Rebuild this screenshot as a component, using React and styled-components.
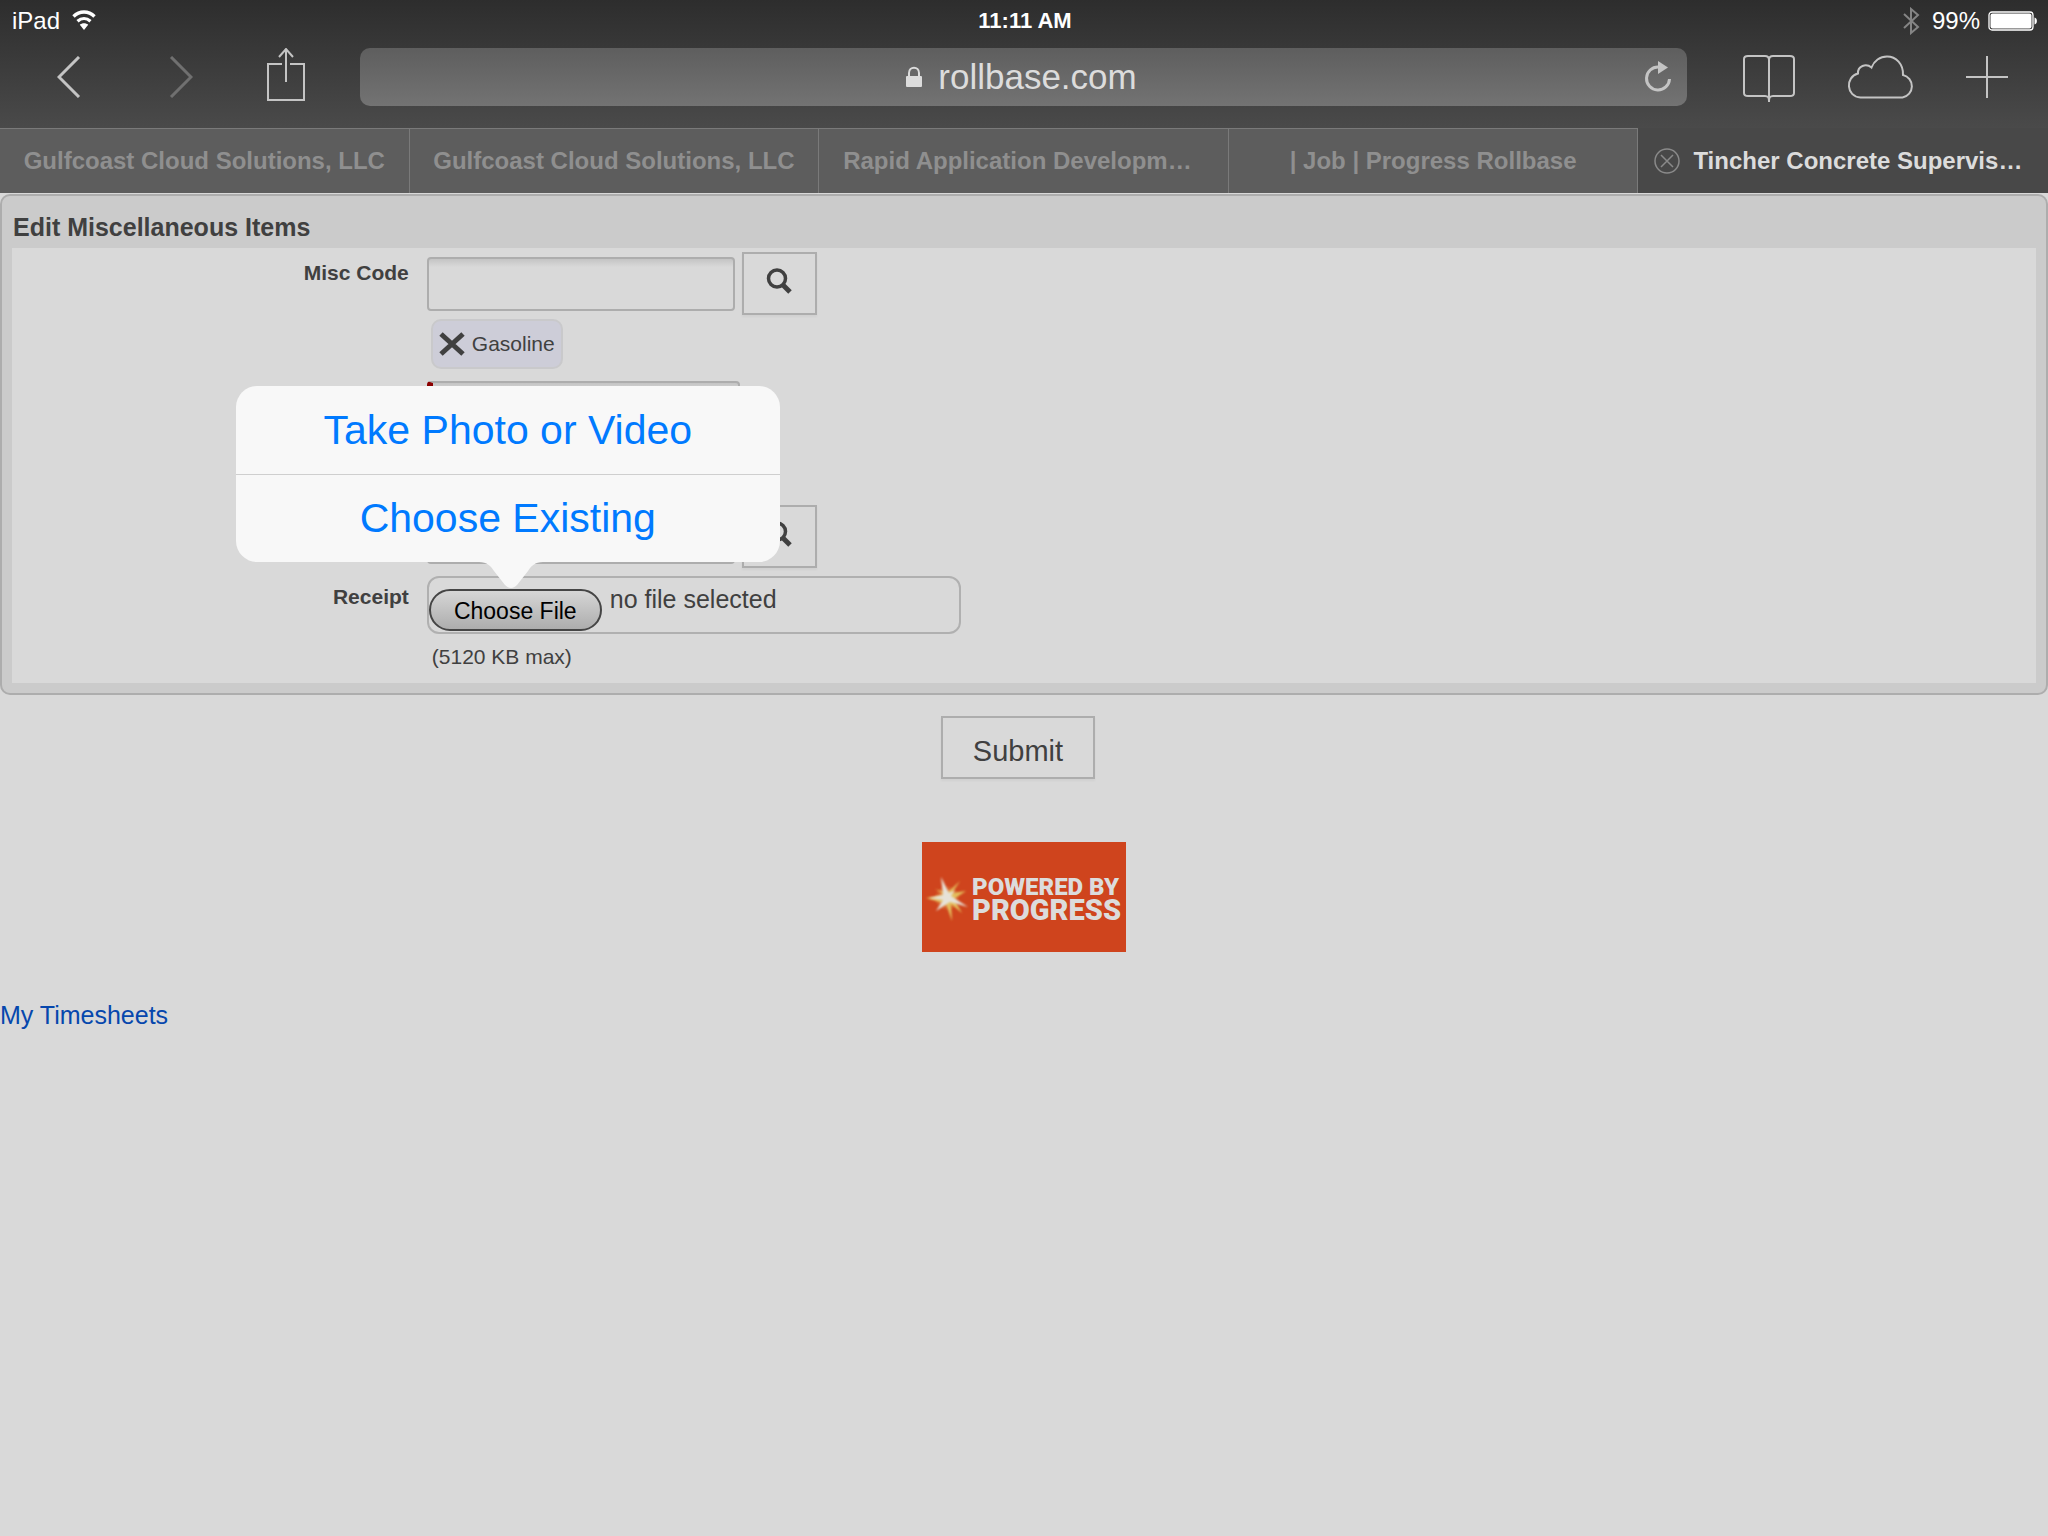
import React, { useState } from 'react';
import styled, { createGlobalStyle } from 'styled-components';

const GlobalStyle = createGlobalStyle`
  * {
    box-sizing: border-box;
  }

  body {
    margin: 0;
    background-color: #d9d9d9;
    color: #404040;
    font-family: "Liberation Sans", Arial, sans-serif;
    font-size: 25px;
    line-height: 28px;
  }

  button,
  input {
    font-family: inherit;
  }
`;

const Browser = styled.header`
  background: linear-gradient(#2d2d2d, #4a4a4a 128px);
`;

const StatusBar = styled.div`
  display: grid;
  grid-template-columns: 1fr auto 1fr;
  align-items: center;
  height: 42px;
  padding: 0 10px 0 12px;
  font-size: 24px;
  color: #fff;
`;

const StatusGroup = styled.div`
  display: flex;
  align-items: center;
  justify-content: ${({ $end }) => ($end ? 'flex-end' : 'flex-start')};
  gap: ${({ $end }) => ($end ? '8px' : '12px')};
`;

const Time = styled.span`
  font-size: 22px;
  font-weight: bold;
`;

const Toolbar = styled.nav`
  display: flex;
  align-items: center;
  height: 86px;
  padding: 0 40px 16px 57px;
`;

const IconGroup = styled.div`
  display: flex;
  align-items: center;
  flex: none;
  gap: ${({ $gap }) => $gap};
`;

const IconButton = styled.button`
  display: flex;
  flex: none;
  padding: 0;
  border: none;
  background: none;
  color: ${({ disabled }) => (disabled ? '#707070' : '#c4c4c4')};
  cursor: pointer;
`;

const AddressBar = styled.div`
  display: flex;
  align-items: center;
  flex: 1;
  height: 58px;
  margin: 0 55px 0 54px;
  padding: 0 15px;
  border-radius: 10px;
  background: linear-gradient(#5e5e5e, #737373);
  color: #dcdcdc;
`;

const Address = styled.div`
  display: flex;
  align-items: center;
  justify-content: center;
  gap: 16px;
  flex: 1;
  padding-left: 24px;
  font-size: 35px;
  line-height: 40px;
`;

const Tabs = styled.div`
  display: grid;
  grid-template-columns: repeat(5, 1fr);
  height: 65px;
`;

const Tab = styled.div`
  display: flex;
  align-items: center;
  justify-content: ${({ $long }) => ($long ? 'flex-start' : 'center')};
  gap: 13px;
  min-width: 0;
  padding: 0 ${({ $active }) => ($active ? '16px' : '24px')};
  border-top: 1px solid ${({ $active }) => ($active ? 'transparent' : '#7a7a7a')};
  border-right: ${({ $active }) => ($active ? 'none' : '1px solid #7a7a7a')};
  background-color: ${({ $active }) => ($active ? '#484848' : '#5d5d5d')};
`;

const TabLink = styled.a`
  font-size: 24px;
  font-weight: bold;
  white-space: nowrap;
  text-decoration: none;
  color: ${({ $active }) => ($active ? '#dcdcdc' : '#8f8f8f')};
`;

const Panel = styled.section`
  margin-top: 1px;
  padding: 17px 10px 10px;
  border: 2px solid #adadad;
  border-radius: 10px;
  background-color: #cbcbcb;
`;

const Title = styled.h1`
  margin: 0 0 7px 1px;
  font-size: 25px;
  line-height: 28px;
`;

const Fields = styled.div`
  display: grid;
  gap: 8px;
  padding: 4px 0 14px;
  background-color: #d9d9d9;
`;

const Field = styled.div`
  display: grid;
  grid-template-columns: 20% 1fr;
`;

const Label = styled.label`
  padding: 9px 8px 0 0;
  font-size: 21px;
  font-weight: bold;
  line-height: 24px;
  text-align: right;
`;

const Control = styled.div`
  display: flex;
  flex-direction: column;
  align-items: flex-start;
  grid-column: 2;
  padding-left: 10px;
`;

const Lookup = styled.div`
  display: flex;
  align-items: center;
  gap: 7px;
`;

const TextBox = styled.input`
  width: ${({ required }) => (required ? '313px' : '308px')};
  height: 54px;
  padding: 0 8px;
  border: 2px solid #adadad;
  border-left: ${({ required }) => (required ? '6px solid #8b0000' : '2px solid #adadad')};
  border-radius: 4px;
  background: linear-gradient(#c4c4c4, #d9d9d9 8px);
  font-size: 21px;
`;

const SquareButton = styled.button`
  display: flex;
  align-items: center;
  justify-content: center;
  min-width: 75px;
  height: 63px;
  padding: ${({ $text }) => ($text ? '7px 30px 0' : '0 0 5px')};
  border: 2px solid #adadad;
  background-color: #d9d9d9;
  box-shadow: 0 2px 2px #0000000a;
  color: #404040;
  font-size: 29px;
`;

const Chip = styled.div`
  display: flex;
  align-items: center;
  gap: 7px;
  height: 50px;
  margin: 4px 0 4px 4px;
  padding: 0 6px;
  border: 2px solid #c9c9cb;
  border-radius: 10px;
  background-color: #cdcdd8;
  font-size: 21px;
  line-height: 24px;
`;

const FileBox = styled.div`
  position: relative;
  display: flex;
  gap: 8px;
  width: 534px;
  height: 58px;
  border: 2px solid #b0b0b0;
  border-radius: 12px;
`;

const FileInput = styled.input`
  position: absolute;
  width: 1px;
  height: 1px;
  opacity: 0;
`;

const FileButton = styled.label`
  display: flex;
  align-items: center;
  justify-content: center;
  width: 173px;
  height: 42px;
  margin-top: 11px;
  padding-top: 2px;
  border: 2px solid #454545;
  border-radius: 21px;
  background: linear-gradient(#d6d6d6, #adadad);
  color: #000;
  font-size: 23px;
`;

const FileName = styled.span`
  padding-top: 7px;
`;

const Hint = styled.small`
  margin: 11px 0 0 5px;
  font-size: 21px;
  line-height: 24px;
`;

const Popover = styled.div`
  position: absolute;
  bottom: 70px;
  left: -193px;
  width: 544px;
  border-radius: 21px;
  background-color: #f8f8f8;
`;

const PopoverButton = styled.button`
  display: block;
  width: 100%;
  height: 88px;
  padding: ${({ $divided }) => ($divided ? '0 0 2px' : '0')};
  border: none;
  border-top: ${({ $divided }) => ($divided ? '1px solid #cfcfcf' : 'none')};
  background: none;
  color: #007aff;
  font-size: 41px;
  line-height: 48px;
  cursor: pointer;
`;

const PopoverArrow = styled.svg`
  position: absolute;
  top: 100%;
  left: 243px;
`;

const Actions = styled.div`
  display: flex;
  justify-content: center;
  padding: 21px 12px 0 0;
`;

const Footer = styled.footer`
  padding-top: 63px;
`;

const Badge = styled.a`
  display: flex;
  align-items: center;
  width: 204px;
  height: 110px;
  margin: 0 auto 49px;
  padding: 4px 0 0 3px;
  background-color: #cf441d;
  color: #dcdcdc;
  font-family: Roboto, sans-serif;
  font-weight: 900;
  text-decoration: none;
`;

const BadgeText = styled.span`
  display: flex;
  flex-direction: column;
  margin-left: 3px;
`;

const BadgeLine = styled.span`
  font-size: ${({ $large }) => ($large ? '29px' : '24px')};
  line-height: 23px;
`;

const PageLink = styled.a`
  color: #0647ad;
  text-decoration: none;
`;

const WifiIcon = () => (
  <svg width="24" height="24" viewBox="0 0 24 24" fill="none" stroke="currentColor">
    <path d="M1.5 7.5C7.5 1.5 16.5 1.5 22.5 7.5" strokeWidth="3.4" />
    <path d="M5.5 12.3C9.5 8.7 14.5 8.7 18.5 12.3" strokeWidth="3.2" />
    <path d="M12 21l-4.2-5.2c2.4-2 6-2 8.4 0z" fill="currentColor" stroke="none" />
  </svg>
);

const BluetoothIcon = () => (
  <svg width="21" height="28" viewBox="0 0 21 28" fill="none" stroke="#858585" strokeWidth="2">
    <path d="M1 7l14 13-7 6V2l7 6L1 21" />
  </svg>
);

const BatteryIcon = () => (
  <svg width="50" height="20" viewBox="0 0 50 20" fill="#fff">
    <rect x="1" y="1" width="44" height="18" rx="3" fill="none" stroke="#fff" strokeWidth="1.3" />
    <rect x="2.5" y="2.5" width="41" height="15" rx="2" />
    <path d="M46.5 6.5c3.200.5 3.200 6.500 0 7z" />
  </svg>
);

const Chevron = ({ forward }) => (
  <svg width="24" height="42" viewBox="0 0 24 42" fill="none" stroke="currentColor" strokeWidth="3">
    <path d={forward ? 'M2 1l20 20L2 41' : 'M22 1L2 21l20 20'} />
  </svg>
);

const ShareIcon = () => (
  <svg width="40" height="58" viewBox="0 0 40 58" fill="none" stroke="currentColor" strokeWidth="2">
    <path d="M16 16H2v36h36V16H24M20 34V2M13 9l7-8 7 8" />
  </svg>
);

const LockIcon = () => (
  <svg width="16" height="22" viewBox="0 0 16 22" fill="none">
    <path d="M3 11V7c0-7 10-7 10 0v4" stroke="currentColor" strokeWidth="2" />
    <rect y="10" width="16" height="11" rx="1" fill="currentColor" />
  </svg>
);

const ReloadIcon = () => (
  <svg width="28" height="32" viewBox="0 0 28 32" fill="none">
    <path d="M14.500 6A11.500 11.500 0 1 0 25.500 18" stroke="currentColor" strokeWidth="3" />
    <path d="M14 0l10 6.500L14 13z" fill="currentColor" />
  </svg>
);

const BookIcon = () => (
  <svg width="54" height="50" viewBox="0 0 54 50" fill="none" stroke="currentColor" strokeWidth="2">
    <path d="M27 8c0-3-2-4-4-4H6C3 4 2 5 2 7v34c0 2 1 3 4 3h17c3 0 4 1 4 5 0-4 1-5 4-5h17c3 0 4-1 4-3V7c0-2-1-3-4-3H31c-2 0-4 1-4 4zM27 8v42" />
  </svg>
);

const CloudIcon = () => (
  <svg width="70" height="44" viewBox="-2 0 70 44" fill="none" stroke="currentColor" strokeWidth="2">
    <path d="M12.500 42.500H54.500A11.500 11.500 0 0 0 55 20C55.500 9 48 1.500 39 1.500C32 1.500 26 6 23.500 12.500C18 8 9.500 11 10 18.500C-3 22-2 41.500 12.500 42.500z" />
  </svg>
);

const PlusIcon = () => (
  <svg width="42" height="42" viewBox="0 0 42 42" fill="none" stroke="currentColor" strokeWidth="2">
    <path d="M21 0v42M0 21h42" />
  </svg>
);

const CloseIcon = () => (
  <svg width="26" height="26" viewBox="0 0 26 26" fill="none" stroke="#8a8a8a" strokeWidth="1.5">
    <circle cx="13" cy="13" r="12" />
    <path d="M7 7l12 12M19 7L7 19" />
  </svg>
);

const SearchIcon = () => (
  <svg width="26" height="26" viewBox="0 0 26 26" fill="none" stroke="currentColor">
    <circle cx="11" cy="10.500" r="8.500" strokeWidth="3.500" />
    <path d="M17 17l7 7" strokeWidth="5" />
  </svg>
);

const RemoveIcon = () => (
  <svg width="26" height="26" viewBox="0 0 26 26" fill="none" stroke="#404040" strokeWidth="5">
    <path d="M2 3l22 20M24 3L2 23" />
  </svg>
);

const Spark = () => (
  <svg width="44" height="46" viewBox="0 0 44 46">
    <defs>
      <radialGradient id="glow">
        <stop offset="0" stopColor="#f6edc0" />
        <stop offset="0.5" stopColor="#e9a860" stopOpacity="0.6" />
        <stop offset="1" stopColor="#e08a3a" stopOpacity="0" />
      </radialGradient>
      <filter id="soft">
        <feGaussianBlur stdDeviation="0.8" />
      </filter>
    </defs>
    <circle cx="22" cy="22" r="13" fill="url(#glow)" />
    <path
      d="M1 22l19-3-10-6 12 4L35 5l-8 12 14-2-12 8 8 14-11-9 1 17-6-17z"
      fill="#e3bd5c"
      filter="url(#soft)"
    />
    <path d="M16 1l8 16 6-3-4 6 17 11-18-5-14 9 7-11-14-2 14-3z" fill="#e6e2d8" filter="url(#soft)" />
  </svg>
);

const tabs = [
  'Gulfcoast Cloud Solutions, LLC',
  'Gulfcoast Cloud Solutions, LLC',
  'Rapid Application Developm…',
  '| Job | Progress Rollbase',
  'Tincher Concrete Supervis…',
];

const App = () => {
  const [code, setCode] = useState('');
  const [amount, setAmount] = useState('');
  const [date, setDate] = useState('');
  const [related, setRelated] = useState('');
  const [fileName, setFileName] = useState('no file selected');
  const [activeTab, setActiveTab] = useState(4);

  const handleFile = (e) => {
    const file = e.target.files[0];
    setFileName(file ? file.name : 'no file selected');
  };

  return (
    <>
      <GlobalStyle />
      <Browser>
        <StatusBar>
          <StatusGroup>
            <span>iPad</span>
            <WifiIcon />
          </StatusGroup>
          <Time>11:11 AM</Time>
          <StatusGroup $end>
            <BluetoothIcon />
            <span>99%</span>
            <BatteryIcon />
          </StatusGroup>
        </StatusBar>
        <Toolbar>
          <IconGroup $gap="73px">
            <IconGroup $gap="88px">
              <IconButton aria-label="Back">
                <Chevron />
              </IconButton>
              <IconButton aria-label="Forward" disabled>
                <Chevron forward />
              </IconButton>
            </IconGroup>
            <IconButton aria-label="Share">
              <ShareIcon />
            </IconButton>
          </IconGroup>
          <AddressBar>
            <Address>
              <LockIcon />
              <span>rollbase.com</span>
            </Address>
            <IconButton aria-label="Reload">
              <ReloadIcon />
            </IconButton>
          </AddressBar>
          <IconGroup $gap="50px">
            <IconButton aria-label="Bookmarks">
              <BookIcon />
            </IconButton>
            <IconButton aria-label="Cloud tabs">
              <CloudIcon />
            </IconButton>
            <IconButton aria-label="New tab">
              <PlusIcon />
            </IconButton>
          </IconGroup>
        </Toolbar>
        <Tabs>
          {tabs.map((tab, i) => (
            <Tab key={i} $active={i === activeTab} $long={tab.endsWith('…')}>
              {i === activeTab && (
                <IconButton aria-label="Close tab">
                  <CloseIcon />
                </IconButton>
              )}
              <TabLink href="#" $active={i === activeTab} onClick={() => setActiveTab(i)}>
                {tab}
              </TabLink>
            </Tab>
          ))}
        </Tabs>
      </Browser>

      <form onSubmit={(e) => e.preventDefault()}>
        <Panel>
          <Title>Edit Miscellaneous Items</Title>
          <Fields>
            <Field>
              <Label htmlFor="code">Misc Code</Label>
              <Control>
                <Lookup>
                  <TextBox id="code" value={code} onChange={(e) => setCode(e.target.value)} />
                  <SquareButton type="button" aria-label="Find misc code">
                    <SearchIcon />
                  </SquareButton>
                </Lookup>
                <Chip>
                  <IconButton type="button" aria-label="Remove Gasoline">
                    <RemoveIcon />
                  </IconButton>
                  <span>Gasoline</span>
                </Chip>
              </Control>
            </Field>
            <Field>
              <Control>
                <TextBox
                  required
                  aria-label="Amount"
                  value={amount}
                  onChange={(e) => setAmount(e.target.value)}
                />
              </Control>
            </Field>
            <Field>
              <Control>
                <TextBox aria-label="Date" value={date} onChange={(e) => setDate(e.target.value)} />
              </Control>
            </Field>
            <Field>
              <Control>
                <Lookup>
                  <TextBox
                    aria-label="Related record"
                    value={related}
                    onChange={(e) => setRelated(e.target.value)}
                  />
                  <SquareButton type="button" aria-label="Find related record">
                    <SearchIcon />
                  </SquareButton>
                </Lookup>
              </Control>
            </Field>
            <Field>
              <Label htmlFor="receipt">Receipt</Label>
              <Control>
                <FileBox>
                  <FileInput type="file" id="receipt" onChange={handleFile} />
                  <FileButton htmlFor="receipt">Choose File</FileButton>
                  <FileName>{fileName}</FileName>
                  <Popover>
                    <PopoverButton type="button">Take Photo or Video</PopoverButton>
                    <PopoverButton type="button" $divided>
                      Choose Existing
                    </PopoverButton>
                    <PopoverArrow width="64" height="26" viewBox="0 0 64 26">
                      <path d="M0 0c8 0 12 4 15 9l11 14c4 4 8 4 12 0L49 9c3-5 7-9 15-9z" fill="#f8f8f8" />
                    </PopoverArrow>
                  </Popover>
                </FileBox>
                <Hint>(5120 KB max)</Hint>
              </Control>
            </Field>
          </Fields>
        </Panel>
        <Actions>
          <SquareButton type="submit" $text>
            Submit
          </SquareButton>
        </Actions>
      </form>

      <Footer>
        <Badge href="#">
          <Spark />
          <BadgeText>
            <BadgeLine>POWERED BY</BadgeLine>
            <BadgeLine $large>PROGRESS</BadgeLine>
          </BadgeText>
        </Badge>
        <PageLink href="#">My Timesheets</PageLink>
      </Footer>
    </>
  );
};

export default App;
